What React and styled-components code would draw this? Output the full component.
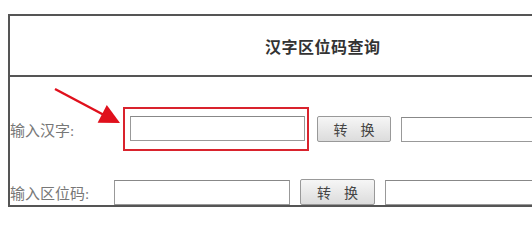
import React from "react";
import styled, { createGlobalStyle } from "styled-components";

const Global = createGlobalStyle`
  html, body {
    margin: 0;
    padding: 0;
    background: #fff;
    overflow: hidden;
  }
  body {
    font-family: "Liberation Serif", "Noto Sans CJK SC", serif;
  }
`;

const Page = styled.div`
  position: relative;
  width: 532px;
  height: 229px;
  padding: 14px 0 0 8px;
  box-sizing: border-box;
  overflow: hidden;
`;

const Table = styled.div`
  width: 524px;
  border: 2px solid #555;
  border-right: none;
  box-sizing: border-box;
  overflow: hidden;
`;

const TitleCell = styled.div`
  height: 59px;
  border-bottom: 2px solid #555;
  display: flex;
  align-items: center;
  padding-left: 255px;
  font-size: 16px;
  font-weight: 600;
  color: #333;
  letter-spacing: 0.5px;
`;

const Body = styled.div`
  padding-top: 30px;
  display: flex;
  flex-direction: column;
  gap: 28px;
`;

const Row = styled.div`
  display: flex;
  align-items: center;
  height: ${(p) => p.$h}px;
`;

const Label = styled.span`
  font-size: 15px;
  color: #777;
  width: ${(p) => p.$w}px;
  flex-shrink: 0;
  white-space: nowrap;
`;

const Field = styled.input`
  width: ${(p) => p.$w}px;
  height: 25px;
  box-sizing: border-box;
  border: 1px solid #999;
  border-top-color: #888;
  outline: none;
  background: #fff;
  flex-shrink: 0;
  padding: 0;
`;

const Mark = styled.div`
  display: flex;
  align-items: center;
  border: 2px solid #d9232d;
  padding: 7px 2px 8px 5px;
  flex-shrink: 0;
`;

const Convert = styled.button`
  width: ${(p) => p.$w}px;
  height: 26px;
  margin: 0 10px 0 ${(p) => p.$ml}px;
  border: 1px solid #999;
  border-radius: 2px;
  background: linear-gradient(#f6f6f6, #dcdcdc);
  font-family: "Noto Sans CJK SC", sans-serif;
  font-size: 14px;
  color: #444;
  word-spacing: 10px;
  padding: 0;
  flex-shrink: 0;
`;

const Arrow = styled.svg`
  position: absolute;
  left: 50px;
  top: 84px;
  pointer-events: none;
`;

export default function App() {
  return (
    <Page>
      <Global />
      <Table>
        <TitleCell>汉字区位码查询</TitleCell>
        <Body>
          <Row $h={44}>
            <Label $w={113}>输入汉字:</Label>
            <Mark>
              <Field $w={175} />
            </Mark>
            <Convert $w={74} $ml={8}>转 换</Convert>
            <Field $w={200} />
          </Row>
          <Row $h={26}>
            <Label $w={104}>输入区位码:</Label>
            <Field $w={176} />
            <Convert $w={75} $ml={10}>转 换</Convert>
            <Field $w={200} />
          </Row>
        </Body>
      </Table>
      <Arrow width="80" height="50" viewBox="0 0 80 50">
        <line x1="5" y1="5" x2="54" y2="31" stroke="#e0101c" strokeWidth="2.5" />
        <polygon points="70,39 47.6,38.7 56.8,20.9" fill="#e0101c" />
      </Arrow>
    </Page>
  );
}
